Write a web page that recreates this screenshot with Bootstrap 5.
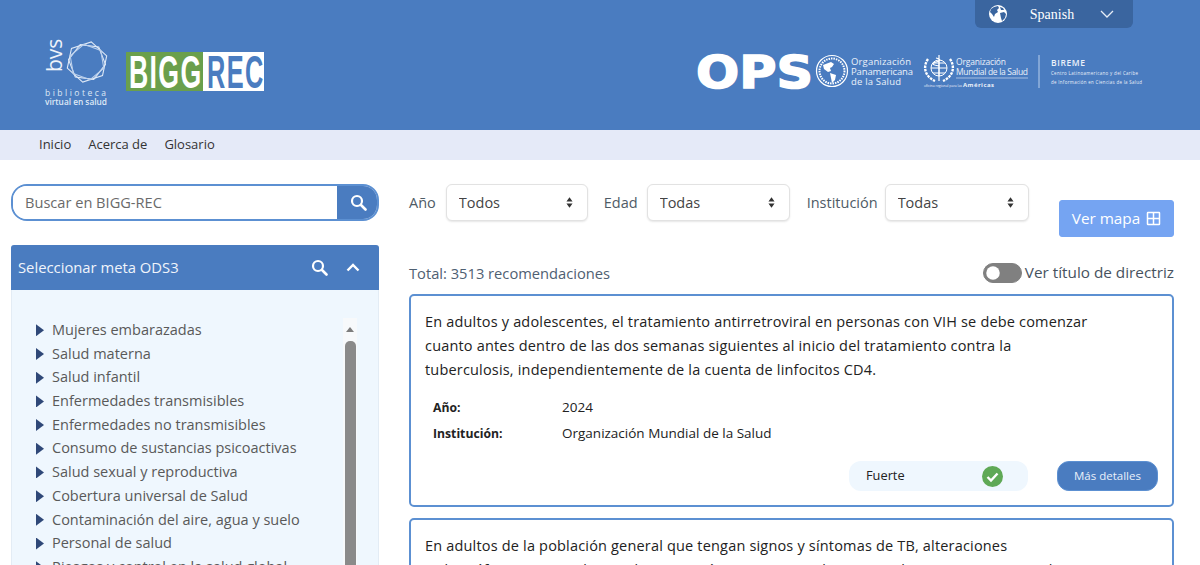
<!DOCTYPE html>
<html lang="es">
<head>
  <meta charset="UTF-8" />
  <meta name="viewport" content="width=device-width, initial-scale=1.0"/>
  <title>BIGG-REC</title>
  <link href="https://cdn.jsdelivr.net/npm/bootstrap@5.3.0/dist/css/bootstrap.min.css" rel="stylesheet" />
  <style>
    html, body { height: 100%; overflow: hidden; }
    body { font-family: "Open Sans", "Noto Sans", sans-serif; font-size: 14.5px; color: #333; background: #fff; }

    .top-head { height: 130px; background: #4a7cc0; padding: 0 55px 0 40px; }
    .logo-left { margin-top: 35px; }
    .head-right { width: 450px; }
    .lang-box { width: 158px; height: 28px; margin-right: 12px; background: #3a659f; border-radius: 0 0 6px 6px; color: #fff; font-family: "Liberation Serif", serif; font-size: 14px; padding: 0 19px 0 14px; }
    .lang-name { margin-right: 3px; }
    .logo-right { margin-top: 22px; display: block; }

    .sub-nav { height: 30px; background: #e5eaf8; padding: 0 0 0 39px; gap: 17px; }
    .sub-nav a { color: #333; text-decoration: none; font-size: 13px; padding: 0; }

    .main-wrap { padding: 24px 26px 0 11px; gap: 30px; }
    .left-side { width: 368px; flex: none; }
    .right-side { flex: 1; min-width: 0; }

    .search-box { height: 37px; border: 2px solid #5c90d2; border-radius: 16px; overflow: hidden; }
    .search-box .form-control { border: 0; border-radius: 0; padding: 0 12px; font-size: 14.6px; color: #555; background: #fff; box-shadow: none; }
    .search-box .form-control::placeholder { color: #6a6a6a; opacity: 1; }
    .search-btn { width: 42px; margin: -2px -2px -2px 0; background: #4a7cc0; border: 0; border-radius: 0; }

    .meta-panel { margin-top: 24px; border: 0; border-radius: 3px 3px 0 0; background: #eff7fe; }
    .meta-head { height: 45px; background: #4a7cc0; color: #f0f4fb; border: 0; padding: 0 19px 0 7px; font-size: 14.8px; border-radius: 3px 3px 0 0 !important; }
    .head-tools { gap: 18px; }
    .meta-body { height: 300px; overflow: hidden; padding: 28px 21px 0 24px; border: 1px solid #e3ecf5; border-top: 0; }
    .meta-list { list-style: none; margin: 0; padding: 0; flex: 1; color: #595959; font-size: 14.5px; }
    .meta-list li { height: 23.7px; line-height: 23.7px; white-space: nowrap; gap: 8px; }
    .tri { width: 8px; height: 12px; flex: none; background: #2f4878; clip-path: polygon(0 0, 100% 50%, 0 100%); margin-top: 1px; }
    .fake-scroll { width: 14px; flex: none; background: #f7f9fb; padding: 9px 1.5px 0; }
    .fake-arrow { width: 0; height: 0; margin: 0 auto 9px; border: 4px solid transparent; border-top: 0; border-bottom: 5px solid #7d7d7d; }
    .fake-thumb { width: 11px; height: 300px; background: #8a8a8a; border-radius: 5px; }

    .filter-row { height: 53px; }
    .filter-label { color: #4f5b66; font-size: 14.5px; }
    .filter-row .form-select { height: 37px; font-size: 14.5px; color: #444; padding: 0 30px 0 12px; border: 1px solid #e2e2e2; box-shadow: 0 1px 2px rgba(0,0,0,.1); flex: none;
      background-image: url("data:image/svg+xml,%3csvg xmlns='http://www.w3.org/2000/svg' viewBox='0 0 8 12'%3e%3cpath fill='%23333' d='M4 0l3.5 4.8H.5zM4 12L.5 7.2h7z'/%3e%3c/svg%3e");
      background-size: 7px 11px; background-position: right 14px center; }
    .sel-a { width: 142px; margin: 0 16px 0 10px; }
    .sel-b { width: 143px; margin: 0 17px 0 9px; }
    .sel-c { width: 144px; margin-left: 7px; }
    .map-btn { width: 115px; height: 37px; margin-top: 16px; margin-left: auto; background: #75a4f2; border: 1px solid #75a4f2; color: #fff; font-size: 15.3px; padding: 0; border-radius: 3px; gap: 6px; }

    .total-row { height: 57px; color: #4f6072; font-size: 14.7px; padding-bottom: 10px; }
    .dir-switch { min-height: 0; padding: 0; margin: 0; gap: 3px; color: #47525e; font-size: 15.3px; }
    .dir-switch .form-check-input { width: 39px; height: 20px; margin: 0; float: none; background-color: #808080; border-color: #808080;
      background-image: url("data:image/svg+xml,%3csvg xmlns='http://www.w3.org/2000/svg' viewBox='-4 -4 8 8'%3e%3ccircle r='3' fill='%23fff'/%3e%3c/svg%3e"); }

    .rec-box { border: 2px solid #5c90d2; border-radius: 5px; margin-bottom: 11px; color: #222; }
    .rec-box .card-body { padding: 14px 14px 14px; }
    .rec-text { line-height: 24px; margin: 0; font-size: 14.5px; letter-spacing: .18px; white-space: nowrap; }
    .rec-info { margin: 12px 0 0 8px; font-size: 13.5px; }
    .rec-info div { height: 26px; line-height: 26px; }
    .rec-info b { display: inline-block; width: 129px; font-weight: 700; font-size: 12.2px; }
    .rec-foot { gap: 29px; margin-top: 15px; }
    .grade-pill { width: 179px; height: 30px; background: #eff7fe; border-radius: 12px; padding: 0 25px 0 17px; font-size: 12.8px; }
    .more-btn { width: 101px; height: 30px; padding: 0; background: #4a7cc0; border: 1px solid #5c90d2; color: #e9f0fa; border-radius: 12px; font-size: 11.5px; }
  </style>
</head>
<body>
  <header class="top-head d-flex justify-content-between">
    <svg class="logo-left" width="226" height="76" viewBox="40 35 226 76">
      <text transform="translate(62 72) rotate(-90)" font-family="Open Sans" font-size="21" fill="#eef3fa">bvs</text>
      <g fill="none" stroke="#dfe9f6" stroke-width="1.100">
        <path d="M87 41.500L105 52 105 72 87 82.500 69 72 69 52z" transform="rotate(12 87 62)"/>
        <path d="M87 43L103 52.500 103 71.500 87 81 71 71.500 71 52.500z" transform="rotate(38 87 62)"/>
        <path d="M87 44L102.500 53 102.500 71 87 80 71.500 71 71.500 53z" transform="rotate(-10 87 62)" stroke="#b9cfec"/>
      </g>
      <text x="45" y="96" font-family="Open Sans" font-size="8.500" fill="#dfe9f6" letter-spacing="2.500">biblioteca</text>
      <text x="45" y="105" font-family="Open Sans" font-size="8.300" font-weight="600" fill="#dfe9f6">virtual en salud</text>
      <rect x="126" y="52" width="77" height="39" fill="#6a9f4c"/>
      <rect x="203" y="52" width="61" height="39" fill="#fff"/>
      <text transform="translate(129 88) scale(.58 1)" font-family="Liberation Sans" font-weight="700" font-size="46" fill="#fff" letter-spacing="2.300">BIGG</text>
      <text transform="translate(207 88) scale(.55 1)" font-family="Liberation Sans" font-weight="700" font-size="46" fill="#4a7cc0" letter-spacing="2.500">REC</text>
    </svg>
    <div class="head-right d-flex flex-column">
      <div class="lang-box d-flex align-items-center justify-content-between align-self-end">
        <svg width="18" height="18" viewBox="0 0 18 18"><circle cx="9" cy="9" r="9" fill="#fff"/><path fill="#3a659f" d="M5 2l4-1 1 2-2 2 1 2-3 2-1 3-2-3-2-2 1-3zM11 8l4-1 2 2-1 4-3 3-1-3zM11 2l3 1 1 2-3 0z"/></svg>
        <span class="lang-name">Spanish</span>
        <svg width="14" height="8" viewBox="0 0 14 8"><path d="M1 1l6 6 6-6" fill="none" stroke="#e6edf7" stroke-width="1.300"/></svg>
      </div>
      <svg class="logo-right" width="450" height="46" viewBox="695 50 450 46">
        <text transform="translate(696 88) scale(1.130 1)" font-family="DejaVu Sans" font-weight="700" font-size="45" fill="#fff" stroke="#fff" stroke-width="1.500">OPS</text>
        <g fill="none" stroke="#fff">
          <circle cx="832" cy="71" r="15.500" stroke-width="1.200"/>
          <circle cx="832" cy="71" r="12.500" stroke-width="2" stroke-dasharray="1.500 1"/>
        </g>
        <path fill="#fff" d="M823 65l8-3 3 2-2 3-2 1 1 3-3 1-4-3zM830 73l6 2-1 5-3 3-1-5z"/>
        <g font-family="Open Sans" fill="#eaf1fa">
          <text x="851" y="65" font-size="9.500" textLength="60">Organización</text>
          <text x="851" y="75" font-size="9.500" textLength="62">Panamericana</text>
          <text x="851" y="85" font-size="9.500" textLength="50">de la Salud</text>
          <text x="956" y="65" font-size="8.500" textLength="50">Organización</text>
          <text x="956" y="75" font-size="8.500" textLength="72">Mundial de la Salud</text>
          <text x="924" y="87" font-size="3.500" textLength="38">oficina regional para las</text>
          <text x="963" y="87" font-size="6" font-weight="700" textLength="31">Américas</text>
          <text x="1051" y="66" font-size="8.500" font-weight="600" letter-spacing=".6">BIREME</text>
          <text x="1051" y="75" font-size="4.400" textLength="87">Centro Latinoamericano y del Caribe</text>
          <text x="1051" y="84" font-size="4.400" textLength="91">de Información en Ciencias de la Salud</text>
        </g>
        <g fill="none" stroke="#fff" stroke-width="1">
          <circle cx="939" cy="68" r="8"/>
          <path d="M931 68h16M939 60v16M933 63h12M933 73h12"/>
          <path d="M939 55v26M936 58c5 1 5 3 0 4s-4 3 3 4" stroke-width="1.200"/>
          <path d="M928 59c-5 7-4 17 7 22M950 59c5 7 4 17-7 22" stroke-width="2.400" stroke-dasharray="2.500 1"/>
        </g>
        <path d="M956 78h72" stroke="#cfdcef" stroke-width=".7"/>
        <path d="M1039 55v33" stroke="#b9cfec" stroke-width="1"/>
      </svg>
    </div>
  </header>

  <nav class="sub-nav nav align-items-center">
    <a class="nav-link" href="#">Inicio</a>
    <a class="nav-link" href="#">Acerca de</a>
    <a class="nav-link" href="#">Glosario</a>
  </nav>

  <div class="main-wrap d-flex">
    <aside class="left-side">
      <div class="search-box input-group flex-nowrap">
        <input type="text" class="form-control" placeholder="Buscar en BIGG-REC">
        <button class="search-btn btn d-flex align-items-center justify-content-center" type="button">
          <svg width="17" height="17" viewBox="0 0 17 17"><circle cx="7" cy="7" r="5" fill="none" stroke="#fff" stroke-width="2.200"/><path d="M11 11l4.500 4.500" stroke="#fff" stroke-width="2.600" stroke-linecap="round"/></svg>
        </button>
      </div>

      <div class="meta-panel card">
        <div class="meta-head card-header d-flex align-items-center justify-content-between">
          <span>Seleccionar meta ODS3</span>
          <span class="head-tools d-flex align-items-center">
            <svg width="17" height="17" viewBox="0 0 17 17"><circle cx="7" cy="7" r="5" fill="none" stroke="#fff" stroke-width="2.200"/><path d="M11 11l4.500 4.500" stroke="#fff" stroke-width="2.600" stroke-linecap="round"/></svg>
            <svg width="14" height="9" viewBox="0 0 14 9"><path d="M1.500 7.500L7 2l5.500 5.500" fill="none" stroke="#fff" stroke-width="2.400"/></svg>
          </span>
        </div>
        <div class="meta-body d-flex">
          <ul class="meta-list">
            <li class="d-flex align-items-center"><i class="tri"></i>Mujeres embarazadas</li>
            <li class="d-flex align-items-center"><i class="tri"></i>Salud materna</li>
            <li class="d-flex align-items-center"><i class="tri"></i>Salud infantil</li>
            <li class="d-flex align-items-center"><i class="tri"></i>Enfermedades transmisibles</li>
            <li class="d-flex align-items-center"><i class="tri"></i>Enfermedades no transmisibles</li>
            <li class="d-flex align-items-center"><i class="tri"></i>Consumo de sustancias psicoactivas</li>
            <li class="d-flex align-items-center"><i class="tri"></i>Salud sexual y reproductiva</li>
            <li class="d-flex align-items-center"><i class="tri"></i>Cobertura universal de Salud</li>
            <li class="d-flex align-items-center"><i class="tri"></i>Contaminación del aire, agua y suelo</li>
            <li class="d-flex align-items-center"><i class="tri"></i>Personal de salud</li>
            <li class="d-flex align-items-center"><i class="tri"></i>Riesgos y control en la salud global</li>
          </ul>
          <div class="fake-scroll">
            <div class="fake-arrow"></div>
            <div class="fake-thumb"></div>
          </div>
        </div>
      </div>
    </aside>

    <main class="right-side">
      <div class="filter-row d-flex align-items-start">
        <label class="filter-label align-self-start lh-lg mt-1">Año</label>
        <select class="form-select sel-a"><option>Todos</option></select>
        <label class="filter-label align-self-start lh-lg mt-1">Edad</label>
        <select class="form-select sel-b"><option>Todas</option></select>
        <label class="filter-label align-self-start lh-lg mt-1">Institución</label>
        <select class="form-select sel-c"><option>Todas</option></select>
        <button class="map-btn btn d-flex align-items-center justify-content-center" type="button">
          Ver mapa
          <svg width="15" height="15" viewBox="0 0 15 15"><path d="M2 1.500h11a.5.5 0 0 1 .5.5v11a.5.5 0 0 1-.5.5H2a.5.5 0 0 1-.5-.5V2a.5.5 0 0 1 .5-.5zM7.500 1.500v12M1.500 7.500h12" fill="none" stroke="#fff" stroke-width="1.500"/></svg>
        </button>
      </div>

      <div class="total-row d-flex align-items-end justify-content-between">
        <span>Total: 3513 recomendaciones</span>
        <div class="dir-switch form-check form-switch d-flex align-items-center">
          <input class="form-check-input" type="checkbox" id="verTitulo">
          <label class="form-check-label" for="verTitulo">Ver título de directriz</label>
        </div>
      </div>

      <div class="rec-box card">
        <div class="card-body">
          <p class="rec-text">En adultos y adolescentes, el tratamiento antirretroviral en personas con VIH se debe comenzar<br>cuanto antes dentro de las dos semanas siguientes al inicio del tratamiento contra la<br>tuberculosis, independientemente de la cuenta de linfocitos CD4.</p>
          <div class="rec-info">
            <div><b>Año:</b>2024</div>
            <div><b>Institución:</b>Organización Mundial de la Salud</div>
          </div>
          <div class="rec-foot d-flex justify-content-end">
            <div class="grade-pill d-flex align-items-center justify-content-between">
              <span>Fuerte</span>
              <svg width="21" height="21" viewBox="0 0 21 21"><circle cx="10.500" cy="10.500" r="10.500" fill="#5fa956"/><path d="M5.500 11l3.500 3.500 6.500-7" fill="none" stroke="#fff" stroke-width="2.400"/></svg>
            </div>
            <button class="more-btn btn" type="button">Más detalles</button>
          </div>
        </div>
      </div>

      <div class="rec-box card">
        <div class="card-body">
          <p class="rec-text">En adultos de la población general que tengan signos y síntomas de TB, alteraciones<br>radiográficas o antecedentes de exposición, se recomienda una prueba Xpert MTB/RIF o Ultra</p>
        </div>
      </div>
    </main>
  </div>
</body>
</html>
